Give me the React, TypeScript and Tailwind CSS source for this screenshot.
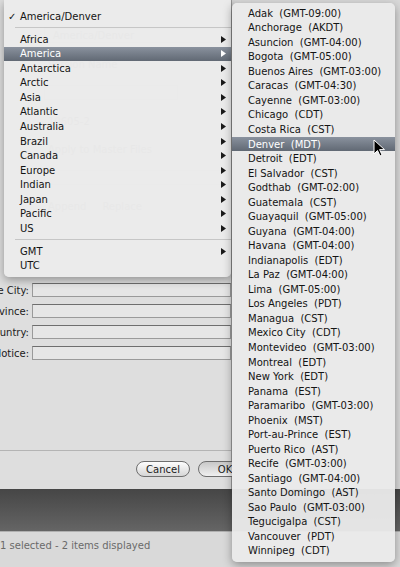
import React from 'react';

const regions = [
  'Africa', 'America', 'Antarctica', 'Arctic', 'Asia', 'Atlantic', 'Australia',
  'Brazil', 'Canada', 'Europe', 'Indian', 'Japan', 'Pacific', 'US',
];

const cities = [
  'Adak  (GMT-09:00)', 'Anchorage  (AKDT)', 'Asuncion  (GMT-04:00)', 'Bogota  (GMT-05:00)',
  'Buenos Aires  (GMT-03:00)', 'Caracas  (GMT-04:30)', 'Cayenne  (GMT-03:00)', 'Chicago  (CDT)',
  'Costa Rica  (CST)', 'Denver  (MDT)', 'Detroit  (EDT)', 'El Salvador  (CST)',
  'Godthab  (GMT-02:00)', 'Guatemala  (CST)', 'Guayaquil  (GMT-05:00)', 'Guyana  (GMT-04:00)',
  'Havana  (GMT-04:00)', 'Indianapolis  (EDT)', 'La Paz  (GMT-04:00)', 'Lima  (GMT-05:00)',
  'Los Angeles  (PDT)', 'Managua  (CST)', 'Mexico City  (CDT)', 'Montevideo  (GMT-03:00)',
  'Montreal  (EDT)', 'New York  (EDT)', 'Panama  (EST)', 'Paramaribo  (GMT-03:00)',
  'Phoenix  (MST)', 'Port-au-Prince  (EST)', 'Puerto Rico  (AST)', 'Recife  (GMT-03:00)',
  'Santiago  (GMT-04:00)', 'Santo Domingo  (AST)', 'Sao Paulo  (GMT-03:00)', 'Tegucigalpa  (CST)',
  'Vancouver  (PDT)', 'Winnipeg  (CDT)',
];

function Arrow({ white }: { white?: boolean }) {
  return (
    <svg width="5" height="7" viewBox="0 0 5 7">
      <path d="M0 0 L5 3.5 L0 7 Z" fill={white ? '#ffffff' : '#1a1a1a'} />
    </svg>
  );
}

function MenuRow({ label, active, arrow }: { label: string; active?: boolean; arrow?: boolean }) {
  return (
    <div
      className={`h-[14.54px] flex items-center justify-between pl-[16px] pr-[5px] whitespace-pre ${
        active ? 'bg-gradient-to-b from-[#8a929e] to-[#616974] text-white' : 'text-[#141414]'
      }`}
    >
      <span>{label}</span>
      {arrow ? <Arrow white={active} /> : null}
    </div>
  );
}

function Separator() {
  return (
    <div className="h-[8.5px] flex items-center pl-[11px]">
      <div className="h-px w-full bg-[#c6c6c6]" />
    </div>
  );
}

function Field({ label }: { label: string }) {
  return (
    <div className="flex items-center h-[14px] gap-[3px]">
      <div className="w-[29px] flex justify-end whitespace-nowrap text-[#1a1a1a]">
        <span>{label}</span>
      </div>
      <div className="flex-1 h-[14px] border border-[#9a9a9a] border-t-[#6e6e6e] bg-[#e6e6e6]" />
    </div>
  );
}

export default function App() {
  return (
    <div
      className="relative w-[400px] h-[567px] overflow-hidden bg-[#d4d4d4] text-[10px]"
      style={{ fontFamily: '"DejaVu Sans", Verdana, sans-serif' }}
    >
      {/* dialog sheet behind the menus */}
      <div className="flex flex-col h-full">
        <div className="flex h-[489px]">
          <div className="w-[232px] bg-[#dedede] border-r border-[#9c9c9c] flex flex-col">
            <div className="flex flex-col pt-[28px] pl-[44px] pr-[10px] gap-[14px] text-[#a4a4a4]">
              <div className="h-[15px] border border-[#cacaca] pl-[8px] flex items-center">America/Denver</div>
              <div className="h-[14px] pl-[4px]">Version Name</div>
              <div className="h-[15px] w-[134px] border border-[#cacaca]" />
              <div className="h-[14px] pl-[4px]">10605-2</div>
              <div className="h-[14px] pl-[4px]">Apply to Master Files</div>
              <div className="h-[15px] border border-[#cacaca]" />
              <div className="h-[14px] pl-[4px] flex gap-[16px]">
                <span>Append</span>
                <span>Replace</span>
              </div>
            </div>
            <div className="flex flex-col gap-[7px] mt-[70px]">
              <Field label="Place City:" />
              <Field label="State/Province:" />
              <Field label="Country:" />
              <Field label="Copyright Notice:" />
            </div>
            <div className="mt-auto border-t border-[#b4b4b4] h-[39px] flex items-start pt-[10px] pl-[136px] gap-[8px]">
              <div className="shrink-0 w-[54px] h-[16px] rounded-full border border-[#6e6e6e] bg-gradient-to-b from-[#fdfdfd] to-[#d6d6d6] flex items-center justify-center text-[#1a1a1a]">
                Cancel
              </div>
              <div className="shrink-0 w-[54px] h-[16px] rounded-full border border-[#6e6e6e] bg-gradient-to-b from-[#c8c8c8] to-[#f0f0f0] flex items-center justify-center text-[#1a1a1a]">
                OK
              </div>
            </div>
          </div>
          <div className="flex-1 bg-[#d8d8d8]" />
        </div>
        <div className="h-[42px] bg-gradient-to-b from-[#464646] to-[#656565]" />
        <div className="flex-1 bg-[#d9d9d9] flex items-center pb-[8px] text-[#6a6a6a] border-t border-[#b0b0b0]">
          1 selected - 2 items displayed
        </div>
      </div>

      {/* first-level menu */}
      <div className="absolute left-[4px] top-0 w-[227px] pt-[9px] pb-[4px] bg-[#ebebeb]/95 rounded-b-[5px] shadow-[0_3px_10px_rgba(0,0,0,0.35)]">
        <div className="h-[14.54px] flex items-center text-[#141414] relative">
          <span className="absolute left-[4px]">✓</span>
          <span className="pl-[16px]">America/Denver</span>
        </div>
        <Separator />
        {regions.map((r) => (
          <MenuRow key={r} label={r} arrow active={r === 'America'} />
        ))}
        <Separator />
        <MenuRow label="GMT" arrow />
        <MenuRow label="UTC" />
      </div>

      {/* submenu */}
      <div className="absolute left-[232px] top-[3px] w-[163px] pt-[3px] pb-[4px] bg-[#ebebeb]/95 rounded-[5px] shadow-[0_3px_10px_rgba(0,0,0,0.35)]">
        {cities.map((c) => (
          <MenuRow key={c} label={c} active={c.startsWith('Denver')} />
        ))}
      </div>

      {/* mouse pointer */}
      <svg className="absolute left-[373px] top-[139px]" width="13" height="19" viewBox="0 0 13 19">
        <path
          d="M1 1 L1 15 L4.5 11.5 L7 17 L9 16 L6.6 10.6 L11.5 10.6 Z"
          fill="#000"
          stroke="#fff"
          strokeWidth="1"
          strokeLinejoin="round"
        />
      </svg>
    </div>
  );
}
